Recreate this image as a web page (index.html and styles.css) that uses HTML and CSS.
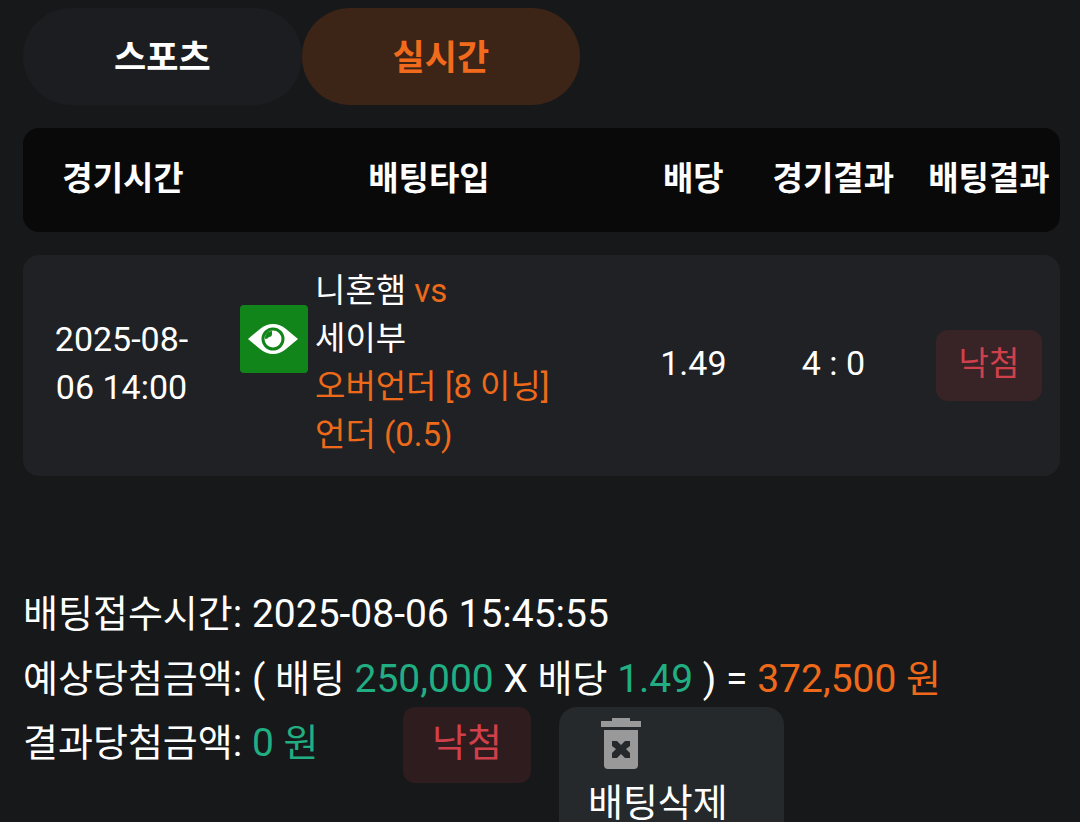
FILE: index.html
```html
<!DOCTYPE html>
<html lang="ko">
<head>
    <meta charset="UTF-8">
    <meta name="viewport" content="width=device-width, initial-scale=1.0">
    <title>배팅내역</title>
    <link rel="stylesheet" href="styles.css">
</head>
<body>
    <div class="container">
        <!-- Tabs -->
        <div class="tabs">
            <button type="button" class="tab">스포츠</button>
            <button type="button" class="tab active">실시간</button>
        </div>

        <!-- Bet list -->
        <table class="bet-table">
            <thead>
                <tr>
                    <th class="col-time">경기시간</th>
                    <th class="col-type">배팅타입</th>
                    <th class="col-odds">배당</th>
                    <th class="col-score">경기결과</th>
                    <th class="col-result">배팅결과</th>
                </tr>
            </thead>
            <tbody>
                <tr>
                    <td class="number time">2025-08-06 14:00</td>
                    <td>
                        <div class="match">
                            <button type="button" class="eye-button" aria-label="상세보기">
                                <svg viewBox="0 0 68 68" width="68" height="68">
                                    <path d="M8 34 Q14 29 20 24 Q26 19 33 19 Q40 19 46 24 Q52 29 58 34 Q52 39 46 44 Q40 49 33 49 Q26 49 20 44 Q14 39 8 34 Z" fill="#fff"/>
                                    <circle cx="33" cy="34" r="10" fill="#fff" stroke="#12851a" stroke-width="3"/>
                                    <path d="M25 34 Q25 26 32 26 V29 Q32 32 29 32 Q28 34 25 34 Z" fill="#12851a"/>
                                </svg>
                            </button>
                            <div class="match-text">
                                니혼햄 <span class="orange">vs</span><br>
                                세이부<br>
                                <span class="orange">오버언더 [8 이닝]<br>언더 (0.5)</span>
                            </div>
                        </div>
                    </td>
                    <td class="number">1.49</td>
                    <td class="number">4 : 0</td>
                    <td><span class="badge">낙첨</span></td>
                </tr>
            </tbody>
        </table>

        <!-- Summary -->
        <div class="summary">
            <p><span class="ko">배팅접수시간</span>: 2025-08-06 15:45:55</p>
            <p><span class="ko">예상당첨금액</span>: ( <span class="ko">배팅</span> <span class="green">250,000</span> X <span class="ko">배당</span> <span class="green">1.49</span> ) = <span class="orange">372,500 <span class="ko">원</span></span></p>
            <div class="summary-row">
                <p class="payout"><span class="ko">결과당첨금액</span>: <span class="green">0 <span class="ko">원</span></span></p>
                <span class="badge badge-large ko">낙첨</span>
                <button type="button" class="delete-button ko">
                    <svg viewBox="0 0 40 52" width="40" height="52">
                        <path fill="#999" d="M0 3 H11 V0 H29 V3 H40 V9 H0 Z"/>
                        <path fill="#999" fill-rule="evenodd" d="M3 12 H37 V47 Q37 51 33 51 H7 Q3 51 3 47 Z M11 23 V28 L15 31 L11 35 V40 H16 L20 36 L24 40 H29 V35 L25 31 L29 28 V23 H24 L20 27 L16 23 Z"/>
                    </svg>
                    <span>배팅삭제</span>
                </button>
            </div>
        </div>
    </div>
</body>
</html>
```
FILE: styles.css
```css
* {
    box-sizing: border-box;
}

body {
    margin: 0;
    background-color: #17181a;
    color: #fff;
    font-family: Roboto, "Noto Sans CJK KR", sans-serif;
}

button {
    border: none;
    padding: 0;
    color: inherit;
    font-family: inherit;
    cursor: pointer;
}

.container {
    padding: 8px 20px 24px 23px;
}

.tabs {
    display: flex;
}

.tab {
    padding: 0 91px 5px;
    height: 97px;
    border-radius: 48px;
    background-color: #1c1d20;
    font-size: 35px;
    font-weight: 700;
}

.tab.active {
    background-color: #3c2417;
    color: #f26a1b;
}

/* Table rows drawn as rounded cards */
.bet-table {
    width: 100%;
    table-layout: fixed;
    border-collapse: separate;
    border-spacing: 0 23px;
    font-size: 33px;
    line-height: 48px;
    text-align: center;
}

.bet-table th {
    height: 104px;
    padding: 0 0 2px 3px;
    background-color: #090909;
    font-weight: 700;
}

.bet-table td {
    height: 221px;
    padding: 0 0 5px 3px;
    background-color: #202124;
}

.bet-table th:first-child,
.bet-table td:first-child {
    border-radius: 16px 0 0 16px;
}

.bet-table th:last-child,
.bet-table td:last-child {
    border-radius: 0 16px 16px 0;
}

.bet-table .time {
    padding: 0 28px 5px;
}

.col-time { width: 19%; }
.col-type { width: 40%; }
.col-odds { width: 11%; }
.col-score { width: 16%; }
.col-result { width: 14%; }

.number {
    font-size: 34px;
}

.match {
    display: flex;
    align-items: flex-start;
    gap: 7px;
    padding-left: 17px;
    text-align: left;
}

.eye-button {
    display: flex;
    margin-top: 38px;
    border-radius: 4px;
    background-color: #12851a;
}

.orange {
    color: #ee6a1a;
}

.green {
    color: #20ae82;
}

.badge {
    display: inline-block;
    padding: 10px 23px 13px;
    border-radius: 12px;
    background-color: #382327;
    color: #d0404b;
}

.bet-table .badge {
    margin-top: 5px;
}

.summary {
    margin-top: 83px;
    font-size: 39px;
    line-height: 65px;
}

.summary p {
    margin: 0;
}

.ko {
    font-size: 38px;
}

.summary-row {
    display: flex;
    align-items: flex-start;
    margin-top: -5px;
}

.payout {
    width: 380px;
    padding-top: 4px;
}

.badge-large {
    padding: 4px 29px 7px;
    background-color: #2f1c1e;
}

.delete-button {
    display: flex;
    flex-direction: column;
    align-items: flex-start;
    margin-left: 28px;
    padding: 11px 56px 24px 29px;
    border-radius: 18px;
    background-color: #25292c;
    line-height: 67px;
}

.delete-button svg {
    margin-left: 13px;
}
```
